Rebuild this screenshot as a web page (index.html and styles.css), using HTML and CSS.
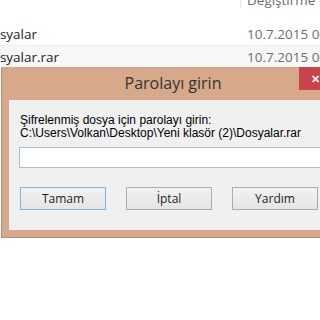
FILE: index.html
```html
<!DOCTYPE html>
<head>
  <title>Parolayı girin</title>
  <link rel="stylesheet" href="styles.css">
</head>
<body>
  <div class="files">
    <div class="header">
      <span class="col-name"></span>
      <span class="col-date">Değiştirme tarihi</span>
    </div>
    <div class="row">
      <span class="col-name">Dosyalar</span>
      <span class="col-date">10.7.2015 00:14</span>
    </div>
    <div class="row alt">
      <span class="col-name">Dosyalar.rar</span>
      <span class="col-date">10.7.2015 00:14</span>
    </div>
  </div>

  <div class="dialog">
    <div class="titlebar">
      <span></span>
      <span class="title">Parolayı girin</span>
      <span class="close">&#x2715;</span>
    </div>
    <div class="panel">
      <p class="prompt">Şifrelenmiş dosya için parolayı girin:<br>C:\Users\Volkan\Desktop\Yeni klasör (2)\Dosyalar.rar</p>
      <input class="password" type="password">
      <div class="buttons">
        <button class="default">Tamam</button>
        <button>İptal</button>
        <button>Yardım</button>
      </div>
    </div>
  </div>
</body>
</html>
```

FILE: styles.css
```css
body {
  margin: 0;
  width: 320px;
  height: 320px;
  overflow: hidden;
  background-color: #fff;
  font-family: "Open Sans", "Liberation Sans", sans-serif;
}

.files {
  margin-left: -18px;
  font-size: 13.5px;
}

.header,
.row {
  display: flex;
}

.header {
  height: 23px;
  color: #6d6d6d;
}

.row {
  height: 22px;
  line-height: 22px;
}

.row.alt {
  height: 21px;
  background-color: #f7f7f7;
  border-top: 1px solid #f0f0f0;
}

.col-name {
  flex-shrink: 0;
  width: 258px;
  color: #1e1e1e;
}

.col-date {
  flex-shrink: 0;
  padding-left: 7px;
  color: #6d6d6d;
  white-space: nowrap;
}

.header .col-date {
  border-left: 1px solid #e5e5e5;
  height: 15px;
  line-height: 14px;
  margin-top: -7px;
  padding-left: 6px;
  overflow: hidden;
}

.dialog {
  width: 328px;
  margin-left: 1px;
  padding: 0 7px 7px;
  background-color: #d5a98a;
  border: 1px solid #b39079;
  border-top: none;
}

.titlebar {
  display: grid;
  grid-template-columns: 45px 1fr 45px;
  height: 33px;
  margin: 0 -7px;
}

.title {
  text-align: center;
  font-size: 16px;
  line-height: 32px;
  color: #333;
}

.close {
  width: 32px;
  height: 23px;
  line-height: 23px;
  background-color: #c9434a;
  color: #fff;
  text-align: center;
  font-size: 11px;
  font-weight: bold;
}

.panel {
  background-color: #f0f0f0;
  padding: 14px 11px 20px 10px;
}

.prompt {
  margin: 0 0 7px 1px;
  font-family: "Liberation Sans", Arial, sans-serif;
  font-size: 12px;
  line-height: 13px;
  color: #000;
}

.password {
  display: block;
  box-sizing: border-box;
  width: 100%;
  height: 21px;
  margin: 0;
  border: 1px solid #a9c0d4;
  background-color: #fff;
}

.buttons {
  display: flex;
  gap: 20px;
  margin-top: 19px;
  padding-left: 1px;
}

.buttons button {
  width: 86px;
  height: 23px;
  border: 1px solid #acacac;
  background: linear-gradient(#f2f2f2, #e5e5e5);
  font-family: "Open Sans", "Liberation Sans", sans-serif;
  font-size: 12px;
  color: #1e1e1e;
  padding: 0;
}

.buttons button.default {
  border-color: #7eb4ea;
}
```
